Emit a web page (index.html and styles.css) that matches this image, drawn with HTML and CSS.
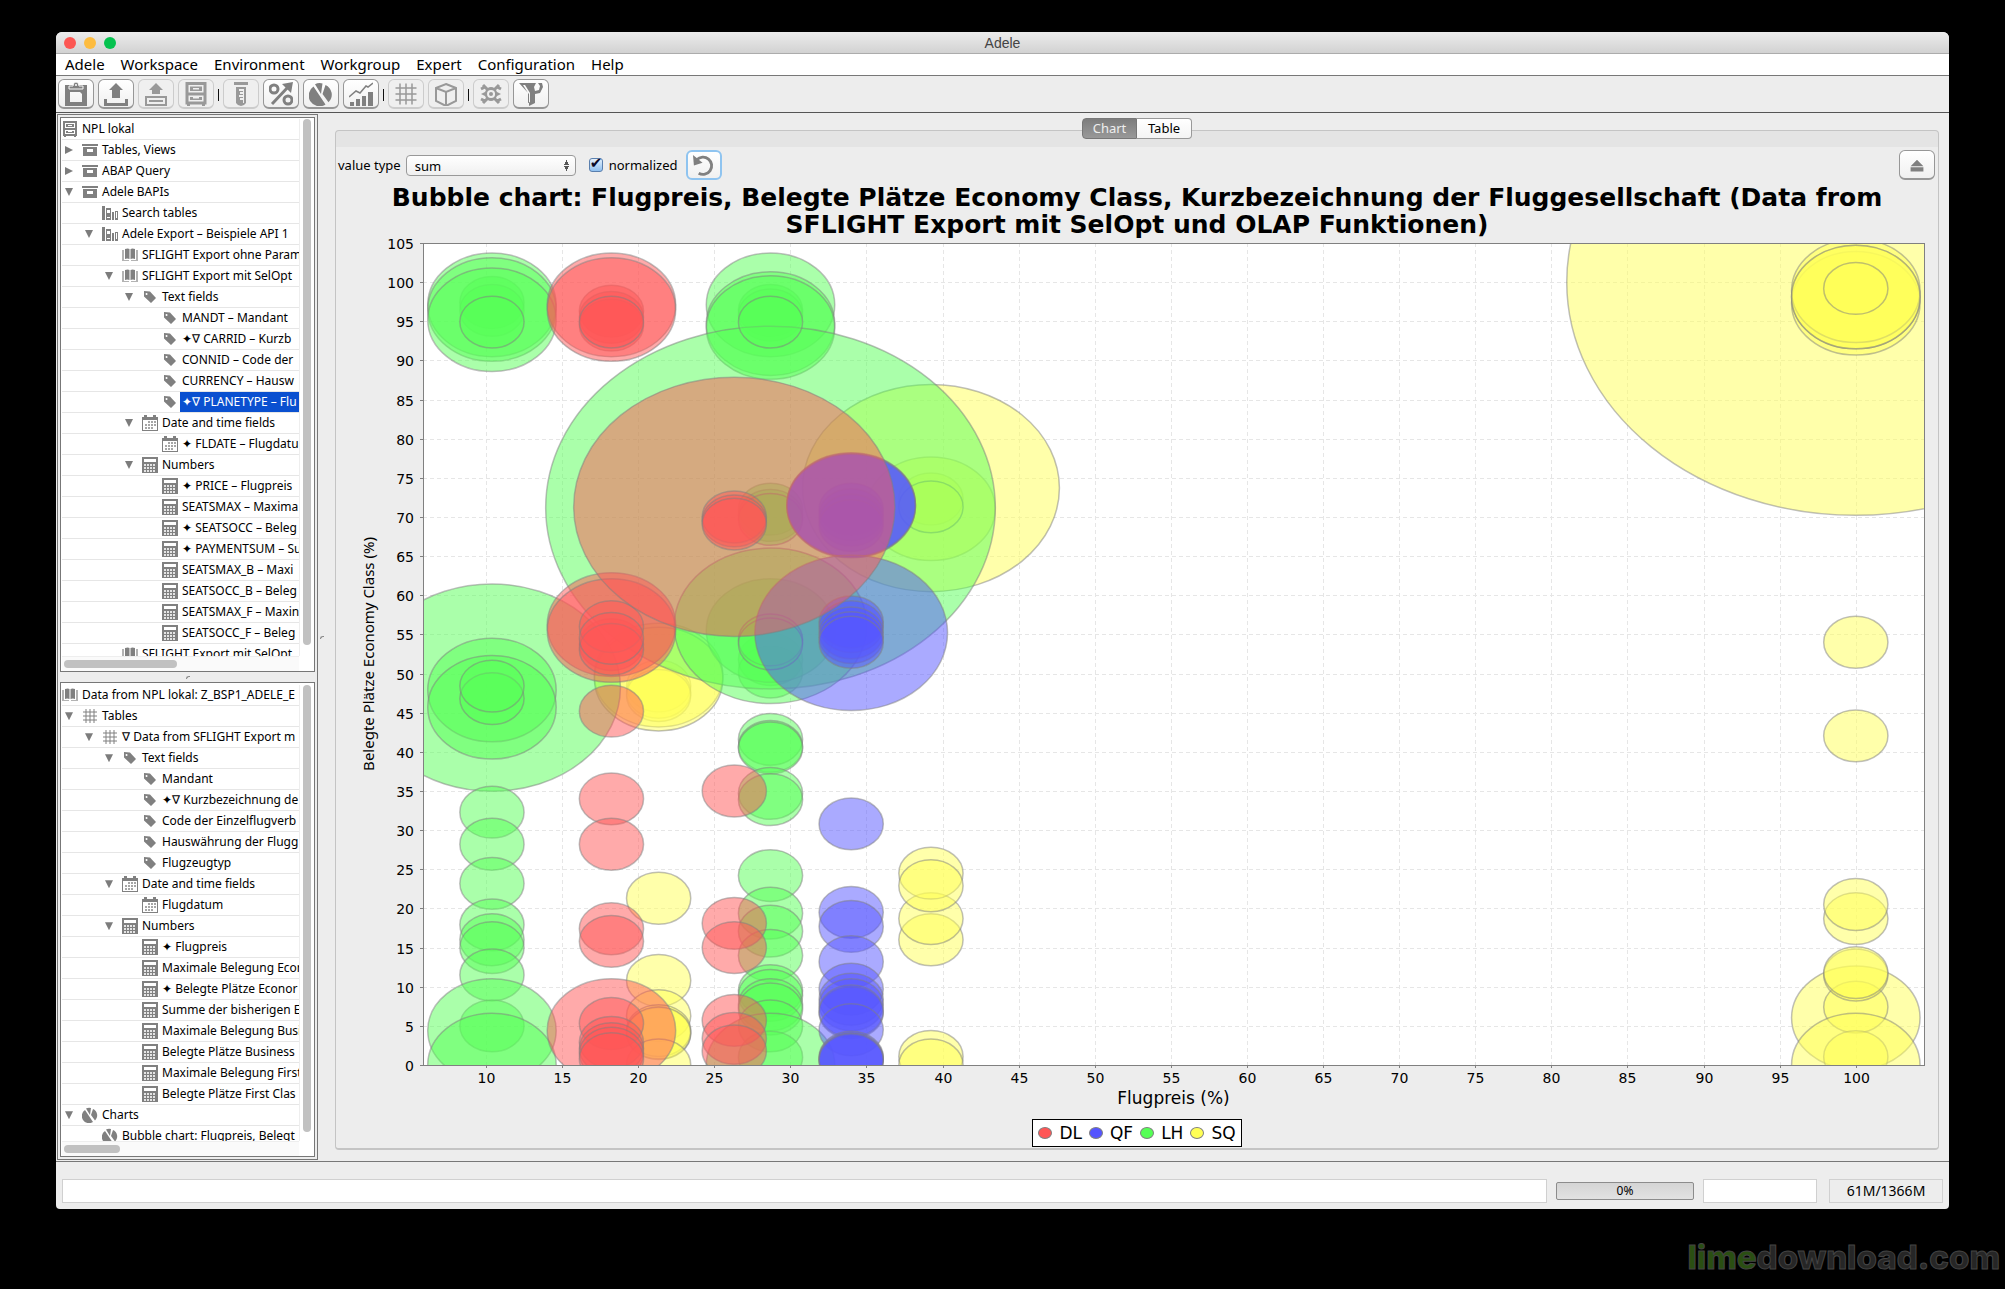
FILE: index.html
```html
<!DOCTYPE html>
<html lang="en">
<head>
    <meta charset="UTF-8">
    <title>Adele</title>
    <link rel="stylesheet" href="styles.css">
</head>
<body>
<svg class="defs" xmlns="http://www.w3.org/2000/svg">
    <symbol id="cabinet" viewBox="0 0 16 16"><path fill-rule="evenodd" d="M1 0h14v15h-1v1h-2v-1H4v1H2v-1H1zM3 2v5h10V2zM3 9v4h10V9z"/><path fill-rule="evenodd" d="M4 3h8v3H4zM6 4v1h4V4zM4 10h8v2H4zM6 10v1h4v-1z"/></symbol>
    <symbol id="box" viewBox="0 0 16 16"><path fill-rule="evenodd" d="M0 2h16v2H0zM1 5h14v9H1zM5 7v3h6V7z"/></symbol>
    <symbol id="shelf" viewBox="0 0 16 16"><path fill-rule="evenodd" d="M0 1h3v14H0zM4 3h5v12H4zM5 5v3h3V5zM5 12v1h3v-1zM10 7h2v8h-2zM13 6h3v9h-3zM14 7v6h1V7z"/></symbol>
    <symbol id="book" viewBox="0 0 16 16"><path d="M0 3h2v10h5v1H0zM14 3h2v11H9v-1h5z" opacity=".6"/><path d="M3 2q3-1 4.500 0v10Q5 11 3 12zM8.500 2q2-1 4.500 0v10q-2-1-4.500 0z"/></symbol>
    <symbol id="tag" viewBox="0 0 16 16"><path fill-rule="evenodd" d="M2 2l6 .5 6 6.500-5 5-7-6.500zM4.500 4a1 1 0 1 0 .1 2 1 1 0 0 0-.1-2z"/></symbol>
    <symbol id="calendar" viewBox="0 0 16 16"><path fill-rule="evenodd" d="M0 2h2V0h3v2h6V0h3v2h2v14H0zM1 5v10h14V5z"/><path d="M6 6h2v2H6zM9 6h2v2H9zM12 6h2v2h-2zM3 9h2v2H3zM6 9h2v2H6zM9 9h2v2H9zM12 9h2v2h-2zM3 12h2v2H3zM6 12h2v2H6zM9 12h2v2H9z" opacity=".7"/></symbol>
    <symbol id="calc" viewBox="0 0 16 16"><path fill-rule="evenodd" d="M0 0h16v16H0zM2 2v3h12V2z"/><path d="M2 8h12M2 11h12M2 14h12" fill="none" stroke="#e4e4e4" stroke-width="2" stroke-dasharray="2 1"/></symbol>
    <symbol id="grid" viewBox="0 0 16 16"><path d="M4 1v14M8 1v14M12 1v14M1 4h14M1 8h14M1 12h14" fill="none" stroke="currentColor" stroke-width="1"/></symbol>
    <symbol id="pie" viewBox="0 0 16 16"><path d="M3 3a7 7 0 1 0 8 12L7 9zM4 1.500A7 7 0 0 1 9 1L8 8zM11 2a7 7 0 0 1 2 11.500L9 8z"/></symbol>
    <symbol id="clipboard" viewBox="0 0 24 24"><path fill-rule="evenodd" d="M1 3h22v21H1zM6 10v10h12v-8l-2-2z"/><path d="M5 7V4h4q0-4 3-4t3 4h4v3z" stroke="#f8f8f8"/><circle cx="12" cy="3" r="1" fill="#fff"/></symbol>
    <symbol id="upload" viewBox="0 0 24 24"><path d="M12 1l7 7h-3v8H8V8H5zM0 17h3v4h18v-4h3v7H0z"/></symbol>
    <symbol id="export" viewBox="0 0 24 24"><path fill-rule="evenodd" d="M12 1l7 7h-3v4H8V8H5zM1 14h22v10H1zM3 16v6h18v-6zM5 18h14v2H5z"/></symbol>
    <symbol id="tube" viewBox="0 0 24 24"><path fill-rule="evenodd" d="M5 0h14v3H5zM7 5h10v16q-2 3-5 3t-5-3zM10 7v2h4v1h-3v2h3v1h-4v2h4v1h-3v2h3v3h1V7z"/></symbol>
    <symbol id="percent" viewBox="0 0 24 24"><g fill="none" stroke="currentColor"><circle cx="5" cy="7" r="4" stroke-width="3"/><circle cx="19" cy="18" r="4" stroke-width="3"/><path d="M3 22L20 4" stroke-width="3"/></g><path d="M13 2l11-2-2 11z"/></symbol>
    <symbol id="bars" viewBox="0 0 24 24"><path d="M1 20h4v4H1zM7 17h4v7H7zM13 14h4v10h-4zM19 10h5v14h-5z"/><path d="M0 15l7-6 4 2 6-7 2 1 5-4" fill="none" stroke="currentColor" stroke-width="1.500"/></symbol>
    <symbol id="cube" viewBox="0 0 24 24"><path d="M12 2l10 4v13l-10 5-10-5V6zM2 6l10 4 10-4M12 10v14" fill="none" stroke="currentColor" stroke-width="2"/></symbol>
    <symbol id="gear" viewBox="0 0 24 24"><path d="M4 3l5 5M20 3l-5 5M4 21l5-5M20 21l-5-5M2 7l4-2M22 7l-4-2M2 17l4 2M22 17l-4 2" fill="none" stroke="currentColor" stroke-width="3"/><path fill-rule="evenodd" d="M2 12l4-2q2-5 6-5t6 5l4 2-4 2q-2 5-6 5t-6-5zM12 8a4 4 0 1 0 .1 8 4 4 0 0 0-.1-8z"/><circle cx="12" cy="12" r="2"/></symbol>
    <symbol id="funnel" viewBox="0 0 24 24"><path fill-rule="evenodd" d="M0 1h17l-2 4 1 4 4-1 1-4-2-3h4l1 4-3 6-5 1v9l-6 3V12zM4 3l5 8v10l2-1V11L6 3z"/></symbol>
    <symbol id="undo" viewBox="0 0 24 24"><path d="M5 6a9 9 0 1 1 2 14" fill="none" stroke="currentColor" stroke-width="3"/><path d="M1 1l1 11 9-3z"/></symbol>
    <symbol id="eject" viewBox="0 0 24 24"><path d="M12 3l11 11H1zM1 16h22v7H1z"/></symbol>
</svg>

<div class="window">
    <header class="titlebar">
        <span class="light red"></span><span class="light orange"></span><span class="light green"></span>
        <span class="caption">Adele</span>
    </header>
    <nav class="menubar">
        <a href="#">Adele</a><a href="#">Workspace</a><a href="#">Environment</a><a href="#">Workgroup</a><a href="#">Expert</a><a href="#">Configuration</a><a href="#">Help</a>
    </nav>
    <div class="toolbar">
        <button class="tool" aria-label="Paste"><svg><use href="#clipboard"/></svg></button>
        <button class="tool" aria-label="Upload"><svg><use href="#upload"/></svg></button>
        <button class="tool" aria-label="Export" disabled><svg><use href="#export"/></svg></button>
        <button class="tool" aria-label="System" disabled><svg><use href="#cabinet"/></svg></button>
        <span class="sep"></span>
        <button class="tool" aria-label="Test" disabled><svg><use href="#tube"/></svg></button>
        <button class="tool" aria-label="Ratios"><svg><use href="#percent"/></svg></button>
        <button class="tool" aria-label="Pie chart"><svg><use href="#pie"/></svg></button>
        <button class="tool" aria-label="Bar chart"><svg><use href="#bars"/></svg></button>
        <span class="sep"></span>
        <button class="tool" aria-label="Table" disabled><svg><use href="#grid"/></svg></button>
        <button class="tool" aria-label="Cube" disabled><svg><use href="#cube"/></svg></button>
        <span class="sep"></span>
        <button class="tool" aria-label="View" disabled><svg><use href="#gear"/></svg></button>
        <button class="tool" aria-label="Filter"><svg><use href="#funnel"/></svg></button>
    </div>

    <div class="work">
        <aside class="sidebar">
            <section class="pane pane-top">
                <ul class="tree">
                    <li class="l0"><svg><use href="#cabinet"/></svg><span>NPL lokal</span></li>
                    <li class="l1"><i class="arrow closed"></i><svg><use href="#box"/></svg><span>Tables, Views</span></li>
                    <li class="l1"><i class="arrow closed"></i><svg><use href="#box"/></svg><span>ABAP Query</span></li>
                    <li class="l1"><i class="arrow"></i><svg><use href="#box"/></svg><span>Adele BAPIs</span></li>
                    <li class="l2"><svg><use href="#shelf"/></svg><span>Search tables</span></li>
                    <li class="l2"><i class="arrow"></i><svg><use href="#shelf"/></svg><span>Adele Export – Beispiele API 1</span></li>
                    <li class="l3"><svg><use href="#book"/></svg><span>SFLIGHT Export ohne Param</span></li>
                    <li class="l3"><i class="arrow"></i><svg><use href="#book"/></svg><span>SFLIGHT Export mit SelOpt</span></li>
                    <li class="l4"><i class="arrow"></i><svg><use href="#tag"/></svg><span>Text fields</span></li>
                    <li class="l5"><svg><use href="#tag"/></svg><span>MANDT – Mandant</span></li>
                    <li class="l5"><svg><use href="#tag"/></svg><span>✦∇ CARRID – Kurzb</span></li>
                    <li class="l5"><svg><use href="#tag"/></svg><span>CONNID – Code der</span></li>
                    <li class="l5"><svg><use href="#tag"/></svg><span>CURRENCY – Hausw</span></li>
                    <li class="l5 selected"><svg><use href="#tag"/></svg><span>✦∇ PLANETYPE – Flu</span></li>
                    <li class="l4"><i class="arrow"></i><svg><use href="#calendar"/></svg><span>Date and time fields</span></li>
                    <li class="l5"><svg><use href="#calendar"/></svg><span>✦ FLDATE – Flugdatu</span></li>
                    <li class="l4"><i class="arrow"></i><svg><use href="#calc"/></svg><span>Numbers</span></li>
                    <li class="l5"><svg><use href="#calc"/></svg><span>✦ PRICE – Flugpreis</span></li>
                    <li class="l5"><svg><use href="#calc"/></svg><span>SEATSMAX – Maxima</span></li>
                    <li class="l5"><svg><use href="#calc"/></svg><span>✦ SEATSOCC – Beleg</span></li>
                    <li class="l5"><svg><use href="#calc"/></svg><span>✦ PAYMENTSUM – Su</span></li>
                    <li class="l5"><svg><use href="#calc"/></svg><span>SEATSMAX_B – Maxi</span></li>
                    <li class="l5"><svg><use href="#calc"/></svg><span>SEATSOCC_B – Beleg</span></li>
                    <li class="l5"><svg><use href="#calc"/></svg><span>SEATSMAX_F – Maxin</span></li>
                    <li class="l5"><svg><use href="#calc"/></svg><span>SEATSOCC_F – Beleg</span></li>
                    <li class="l3"><svg><use href="#book"/></svg><span>SFLIGHT Export mit SelOpt</span></li>
                </ul>
                <div class="vbar"><div class="thumb"></div></div>
                <div class="hbar"><div class="thumb"></div></div>
            </section>
            <div class="splitter"><i class="grip"></i></div>
            <section class="pane pane-bottom">
                <ul class="tree">
                    <li class="l0"><svg><use href="#book"/></svg><span>Data from NPL lokal: Z_BSP1_ADELE_E</span></li>
                    <li class="l1"><i class="arrow"></i><svg><use href="#grid"/></svg><span>Tables</span></li>
                    <li class="l2"><i class="arrow"></i><svg><use href="#grid"/></svg><span>∇ Data from SFLIGHT Export m</span></li>
                    <li class="l3"><i class="arrow"></i><svg><use href="#tag"/></svg><span>Text fields</span></li>
                    <li class="l4"><svg><use href="#tag"/></svg><span>Mandant</span></li>
                    <li class="l4"><svg><use href="#tag"/></svg><span>✦∇ Kurzbezeichnung de</span></li>
                    <li class="l4"><svg><use href="#tag"/></svg><span>Code der Einzelflugverb</span></li>
                    <li class="l4"><svg><use href="#tag"/></svg><span>Hauswährung der Flugg</span></li>
                    <li class="l4"><svg><use href="#tag"/></svg><span>Flugzeugtyp</span></li>
                    <li class="l3"><i class="arrow"></i><svg><use href="#calendar"/></svg><span>Date and time fields</span></li>
                    <li class="l4"><svg><use href="#calendar"/></svg><span>Flugdatum</span></li>
                    <li class="l3"><i class="arrow"></i><svg><use href="#calc"/></svg><span>Numbers</span></li>
                    <li class="l4"><svg><use href="#calc"/></svg><span>✦ Flugpreis</span></li>
                    <li class="l4"><svg><use href="#calc"/></svg><span>Maximale Belegung Econ</span></li>
                    <li class="l4"><svg><use href="#calc"/></svg><span>✦ Belegte Plätze Econor</span></li>
                    <li class="l4"><svg><use href="#calc"/></svg><span>Summe der bisherigen E</span></li>
                    <li class="l4"><svg><use href="#calc"/></svg><span>Maximale Belegung Busi</span></li>
                    <li class="l4"><svg><use href="#calc"/></svg><span>Belegte Plätze Business</span></li>
                    <li class="l4"><svg><use href="#calc"/></svg><span>Maximale Belegung First</span></li>
                    <li class="l4"><svg><use href="#calc"/></svg><span>Belegte Plätze First Clas</span></li>
                    <li class="l1"><i class="arrow"></i><svg><use href="#pie"/></svg><span>Charts</span></li>
                    <li class="l2"><svg><use href="#pie"/></svg><span>Bubble chart: Flugpreis, Belegt</span></li>
                </ul>
                <div class="vbar"><div class="thumb"></div></div>
                <div class="hbar"><div class="thumb"></div></div>
            </section>
        </aside>
        <div class="divider"><i class="grip"></i></div>

        <main class="main">
            <div class="tabs">
                <button class="tab active">Chart</button><button class="tab">Table</button>
            </div>
            <div class="panel">
                <div class="controls">
                    <label for="value-type">value type</label>
                    <select id="value-type" class="select"><option>sum</option></select>
                    <input id="normalized" class="check" type="checkbox" checked>
                    <label for="normalized">normalized</label>
                    <button class="tool refresh" aria-label="Reset"><svg><use href="#undo"/></svg></button>
                    <button class="tool eject" aria-label="Detach"><svg><use href="#eject"/></svg></button>
                </div>
                <h1 class="chart-title">Bubble chart: Flugpreis, Belegte Plätze Economy Class, Kurzbezeichnung der Fluggesellschaft (Data from SFLIGHT Export mit SelOpt und OLAP Funktionen)</h1>
                <div class="chart"><svg id="chart"></svg></div>
                <div class="legend">
                    <span><i class="dot dl"></i>DL</span>
                    <span><i class="dot qf"></i>QF</span>
                    <span><i class="dot lh"></i>LH</span>
                    <span><i class="dot sq"></i>SQ</span>
                </div>
            </div>
        </main>
    </div>

    <footer class="status">
        <input class="message" type="text" aria-label="Message">
        <div class="progress">0%</div>
        <input class="field" type="text" aria-label="Info">
        <div class="memory">61M/1366M</div>
    </footer>
</div>
<div class="watermark"><b>lime</b>download.com</div>
<script src="chart.js"></script>
</body>
</html>
```

FILE: styles.css
```css
* {
    box-sizing: border-box;
}
body {
    display: flex;
    flex-direction: column;
    height: 100vh;
    margin: 0;
    padding: 32px 56px 80px;
    background: #000;
    color: #000;
    font: 12px/20px "Noto Sans", "DejaVu Sans", sans-serif;
    position: relative;
    overflow: hidden;
}
button, input, select {
    font: inherit;
    color: inherit;
    margin: 0;
    padding: 0;
}
.defs {
    position: absolute;
    width: 0;
    height: 0;
}
.window {
    flex: 1;
    min-height: 0;
    display: flex;
    flex-direction: column;
    background: #ededed;
    border-radius: 6px 6px 4px 4px;
    overflow: hidden;
}

/* title bar and menu */
.titlebar {
    display: flex;
    align-items: center;
    gap: 8px;
    height: 22px;
    padding-left: 8px;
    background: linear-gradient(#ececec, #d2d2d2);
    border-bottom: 1px solid #acacac;
    position: relative;
}
.light {
    width: 12px;
    height: 12px;
    border-radius: 50%;
}
.red {
    background: #fc5753;
}
.orange {
    background: #fdbc40;
}
.green {
    background: #05c24f;
}
.caption {
    position: absolute;
    left: 0;
    right: 0;
    text-align: center;
    color: #444;
    font: 14px/22px "Liberation Sans", sans-serif;
}
.menubar {
    display: flex;
    gap: 16px;
    height: 22px;
    padding-left: 9px;
    background: #fff;
    border-bottom: 1px solid #777;
    font-size: 15px;
    line-height: 21px;
}
.menubar a {
    color: #000;
    text-decoration: none;
}
.toolbar {
    display: flex;
    gap: 4px;
    height: 37px;
    padding: 3px 2px;
    border-bottom: 1px solid #555;
}
.tool {
    display: flex;
    align-items: center;
    justify-content: center;
    width: 36px;
    height: 30px;
    color: #808080;
    background: linear-gradient(#fff, #f0f0f0);
    border: 1px solid #979797;
    border-bottom-width: 2px;
    border-radius: 6px;
}
.tool svg {
    width: 24px;
    height: 24px;
    fill: currentColor;
}
.tool:disabled {
    color: #999;
    background: #efefef;
    border-color: #ccc;
}
.sep {
    width: 1px;
    height: 12px;
    margin-top: 10px;
    background: #111;
}

/* trees */
.work {
    flex: 1;
    min-height: 0;
    display: flex;
    border-bottom: 1px solid #777;
}
.sidebar {
    display: flex;
    flex-direction: column;
    width: 261px;
    margin: 1px 0 1px 1px;
    padding: 2px;
    border: 1px solid #777;
}
.pane {
    display: grid;
    grid-template-columns: 1fr 15px;
    grid-template-rows: minmax(0, 1fr) 15px;
    min-height: 0;
    padding: 1px 0 0 1px;
    background: #fff;
    border: 1px solid #777;
}
.pane-top {
    flex: 557 1 0;
}
.pane-bottom {
    flex: 475 1 0;
    padding-top: 2px;
}
.tree {
    min-width: 0;
    margin: 0;
    padding: 0;
    overflow: hidden;
    list-style: none;
}
.tree li {
    display: flex;
    align-items: center;
    height: 21px;
    border-bottom: 1px solid #e6e6e6;
    white-space: nowrap;
}
.tree svg {
    flex: none;
    width: 16px;
    height: 16px;
    margin-right: 2px;
    fill: currentColor;
    color: #808080;
}
.tree span {
    flex: 1;
    min-width: 0;
    padding-left: 2px;
}
.tree .selected span {
    background: #0a50d0;
    color: #fff;
}
.arrow {
    flex: none;
    width: 8px;
    height: 8px;
    margin: 0 9px 0 -17px;
    background: #7c7c7c;
    clip-path: polygon(0 0, 100% 0, 50% 100%);
}
.arrow.closed {
    clip-path: polygon(0 0, 100% 50%, 0 100%);
}
.l1 {
    padding-left: 20px;
}
.l2 {
    padding-left: 40px;
}
.l3 {
    padding-left: 60px;
}
.l4 {
    padding-left: 80px;
}
.l5 {
    padding-left: 100px;
}
.vbar {
    padding: 0 3px;
    border-left: 1px solid #eee;
}
.vbar .thumb {
    height: 98%;
    border-radius: 4px;
    background: #c1c1c1;
}
.hbar {
    padding: 3px 0 3px 2px;
    background: #fafafa;
    border-top: 1px solid #eee;
}
.hbar .thumb {
    width: 48%;
    height: 8px;
    border-radius: 4px;
    background: #c1c1c1;
}
.pane-bottom .hbar .thumb {
    width: 24%;
}
.splitter {
    display: flex;
    align-items: center;
    justify-content: center;
    height: 10px;
}
.divider {
    display: flex;
    align-items: center;
    width: 17px;
    padding: 0 2px;
}
.grip {
    width: 4px;
    height: 3px;
    border: solid #888;
    border-width: 1px 0 0 1px;
    border-radius: 3px 0 0 0;
}

/* chart panel */
.main {
    flex: 1;
    min-width: 0;
    display: flex;
    flex-direction: column;
    padding: 5px 10px 11px 0;
}
.tabs {
    display: flex;
    justify-content: center;
    height: 21px;
    margin-bottom: -9px;
    position: relative;
}
.tab {
    width: 55px;
    background: linear-gradient(#fff, #f4f4f4);
    border: 1px solid #999;
    border-left: 0;
    border-radius: 0 4px 4px 0;
    font-size: 13px;
    line-height: 17px;
}
.tab.active {
    color: #eee;
    background: linear-gradient(#7c7c7c, #999);
    border: 1px solid #777;
    border-radius: 4px 0 0 4px;
}
.panel {
    flex: 1;
    min-height: 0;
    display: flex;
    flex-direction: column;
    padding-top: 19px;
    background: linear-gradient(#e4e4e4 16px, #ededed 16px);
    border: 1px solid #c4c4c4;
    border-bottom-width: 2px;
    border-radius: 4px;
}
.controls {
    display: flex;
    align-items: center;
    height: 30px;
    padding: 0 3px 0 2px;
    font-size: 13px;
}
.select {
    width: 170px;
    height: 21px;
    margin: 0 13px 0 5px;
    padding: 0 8px;
    appearance: none;
    border: 1px solid #999;
    border-radius: 4px;
    background:
        conic-gradient(from 153deg at 50% 0, #555 54deg, transparent 0) right 6px top 4px / 5px 5px no-repeat,
        conic-gradient(from -27deg at 50% 100%, #555 54deg, transparent 0) right 6px bottom 4px / 5px 5px no-repeat,
        linear-gradient(#fff, #f0f0f0);
}
.check {
    width: 14px;
    height: 14px;
    margin-right: 6px;
    appearance: none;
    background: linear-gradient(#e4f0fc, #8fc0f0);
    border: 1px solid #5a7fae;
    border-radius: 3px;
}
.check:checked::before {
    content: "✔";
    display: block;
    color: #0a0a28;
    font: 15px/9px "DejaVu Sans", sans-serif;
}
.refresh {
    margin-left: 8px;
    border: 2px solid #8fc4f0;
}
.refresh svg {
    width: 23px;
    height: 23px;
}
.eject {
    margin-left: auto;
}
.eject svg {
    width: 16px;
    height: 14px;
}
.chart-title {
    margin: 4px 0 0;
    font: bold 25px/27px "DejaVu Sans", sans-serif;
    text-align: center;
    padding: 0 20px;
}
.chart {
    flex: 1;
    min-height: 0;
}
.chart > svg {
    display: block;
    width: 100%;
    height: 100%;
}
.chart text {
    font-family: "DejaVu Sans", sans-serif;
    font-size: 14px;
}
.chart .x-title {
    font-size: 17px;
}
.chart .y-title {
    font-family: "Noto Sans", sans-serif;
    font-size: 15px;
}
.grid-line {
    stroke: #e6e6e6;
    stroke-dasharray: 4 3;
}
.tick {
    stroke: #808080;
}
.frame {
    fill: none;
    stroke: #808080;
}
.bubble {
    fill-opacity: .5;
    stroke: #808080;
    stroke-opacity: .5;
    stroke-width: 1.5px;
}
.bubble.dl {
    fill: #f55;
}
.bubble.qf {
    fill: #55f;
}
.bubble.lh {
    fill: #5f5;
}
.bubble.sq {
    fill: #ff5;
}
.legend {
    display: flex;
    align-self: center;
    gap: 7px;
    height: 28px;
    margin: 8px 0 1px;
    padding: 0 5px;
    background: #fff;
    border: 1px solid #000;
    font: 17px/26px "DejaVu Sans", sans-serif;
}
.legend span {
    display: flex;
    align-items: center;
    gap: 7px;
}
.dot {
    width: 14px;
    height: 12px;
    border: 1px solid #808080;
    border-radius: 50%;
}
.dot.dl {
    background: #f55;
}
.dot.qf {
    background: #55f;
}
.dot.lh {
    background: #5f5;
}
.dot.sq {
    background: #ff5;
}

/* status bar */
.status {
    display: flex;
    align-items: center;
    height: 47px;
    padding: 11px 6px 0;
}
.message, .field, .memory {
    height: 24px;
    border: 1px solid #d0d0d0;
    background: #fff;
}
.message {
    flex: 1;
}
.progress {
    width: 138px;
    height: 18px;
    margin: 0 9px;
    background: linear-gradient(#d4d4d4, #e2e2e2);
    border: 1px solid #8c8c8c;
    border-radius: 2px;
    line-height: 16px;
    text-align: center;
}
.field {
    width: 114px;
    margin-right: 12px;
}
.memory {
    width: 114px;
    background: #ededed;
    font-size: 14px;
    line-height: 22px;
    text-align: center;
}
.watermark {
    position: absolute;
    right: 5px;
    bottom: 12px;
    color: #262626;
    font: 800 33px/40px Inter, sans-serif;
    -webkit-text-stroke: 1px #444;
}
.watermark b {
    font-weight: 800;
    color: #2a4f12;
}
```

FILE: chart.js
```js
(() => {
    const svg = document.querySelector("#chart");
    const NS = "http://www.w3.org/2000/svg";
    const margin = { top: 5, right: 14, bottom: 46, left: 87 };
    const xRange = [5.87, 104.48];
    const yRange = [0, 105];
    const unit = { x: 2.11, y: 3.31 }; // bubble radius of size 1, in axis units

    // per series: price, then the seats as [value, size], painted in this order
    const series = [
        { name: "sq", x: 21.35, points: [[48.4, 1], [47.6, 1], [47.2, 1], [49.8, 2], [49.3, 2], [21.3, 1], [10.8, 1], [6.3, 1], [4, 1], [4.4, 1], [4.1, 1], [0, 1]] },
        { name: "sq", x: 39.24, points: [[72.3, 1], [71.05, 2], [73.7, 4], [71.3, 1], [16, 1], [18.7, 1], [24.5, 1], [22.9, 1], [1.1, 1], [0, 1]] },
        { name: "sq", x: 100, points: [[100, 9], [97.3, 2], [98.1, 2], [98.9, 2], [98.1, 2], [99.2, 1], [54, 1], [42.05, 1], [18.7, 1], [20.5, 1], [6.04, 2], [7.4, 1], [11.5, 1], [11.8, 1], [1.06, 1], [0, 2]] },
        { name: "lh", x: 10.4, points: [[97.4, 1], [96.4, 1], [97.1, 2], [96.5, 2], [95.2, 2], [94.9, 1], [48.2, 4], [47.9, 2], [45.7, 2], [46.8, 1], [48.4, 1], [32.3, 1], [28.2, 1], [23.2, 1], [17.9, 1], [16, 1], [15, 1], [11.5, 1], [5, 1], [4.4, 2], [0, 2]] },
        { name: "lh", x: 28.7, points: [[96.4, 1], [95.8, 1], [97.1, 2], [94.7, 2], [94.2, 2], [71, 1], [70.2, 1], [51.8, 1], [50.2, 1], [55.5, 2], [71.2, 7], [94.9, 1], [69.7, 1], [56.1, 3], [54.3, 1], [53.8, 1], [41.6, 1], [40.7, 1], [40.5, 1], [34.7, 1], [33.9, 1], [24.2, 1], [19.4, 1], [17.1, 1], [14, 1], [9.5, 1], [8.9, 1], [7.7, 1], [7.15, 1], [5, 1], [1, 1], [0, 2]] },
        { name: "qf", x: 34, points: [[71, 1], [70.3, 1], [69.6, 1], [68.9, 1], [71.6, 2], [71.4, 2], [71.5, 2], [55.2, 3], [56.6, 1], [56, 1], [55.2, 1], [54.6, 1], [54, 1], [30.8, 1], [19.5, 1], [17.7, 1], [13.2, 1], [9.7, 1], [8.4, 1], [7.7, 1], [6.7, 1], [6.9, 1], [4.5, 1], [1, 1], [.8, 1], [.6, 1], [.7, 1]] },
        { name: "dl", x: 18.25, points: [[96.3, 1], [95.5, 1], [94.5, 1], [97.1, 2], [96.5, 2], [94.9, 1], [53.7, 1], [56.25, 2], [55.5, 2], [56, 1], [53.1, 1], [54.5, 1], [45.2, 1], [34, 1], [28.2, 1], [17.4, 1], [15.8, 1], [4.4, 2], [5.3, 1], [2.9, 1], [2.1, 1], [1.5, 1], [.8, 1]] },
        { name: "dl", x: 26.32, points: [[71.3, 5], [70, 1], [69.5, 1], [69.1, 1], [35, 1], [18.1, 1], [15, 1], [5.7, 1], [3.4, 1], [1.8, 1]] }
    ];

    function add(parent, tag, attrs, text) {
        const el = document.createElementNS(NS, tag);
        Object.keys(attrs).forEach((key) => el.setAttribute(key, attrs[key]));
        if (text !== undefined) el.textContent = text;
        parent.appendChild(el);
        return el;
    }

    function render() {
        const box = svg.parentNode.getBoundingClientRect();
        const w = Math.round(box.width - margin.left - margin.right);
        const h = Math.round(box.height - margin.top - margin.bottom);
        const kx = w / (xRange[1] - xRange[0]);
        const ky = h / (yRange[1] - yRange[0]);
        svg.innerHTML = "";

        add(svg, "rect", { x: margin.left, y: margin.top, width: w, height: h, fill: "#fff" });
        // nested svg clips the bubbles at the plot edge
        const plot = add(svg, "svg", { x: margin.left, y: margin.top, width: w, height: h });

        for (let v = 10; v <= 100; v += 5) {
            const x = Math.round((v - xRange[0]) * kx) + .5;
            add(plot, "line", { class: "grid-line", x1: x, x2: x, y1: 0, y2: h });
            add(svg, "line", { class: "tick", x1: x + margin.left, x2: x + margin.left, y1: margin.top + h, y2: margin.top + h + 3 });
            add(svg, "text", { x: x + margin.left, y: margin.top + h + 18, "text-anchor": "middle" }, v);
        }
        for (let v = 0; v <= 105; v += 5) {
            const y = Math.round(h - v * ky) + .5;
            add(plot, "line", { class: "grid-line", x1: 0, x2: w, y1: y, y2: y });
            add(svg, "line", { class: "tick", x1: margin.left - 3, x2: margin.left, y1: y + margin.top, y2: y + margin.top });
            add(svg, "text", { x: margin.left - 9, y: y + margin.top + 5, "text-anchor": "end" }, v);
        }
        series.forEach((s) => s.points.forEach(([value, size]) => {
            add(plot, "ellipse", {
                class: "bubble " + s.name,
                cx: (s.x - xRange[0]) * kx,
                cy: h - value * ky,
                rx: size * unit.x * kx,
                ry: size * unit.y * ky
            });
        }));
        add(svg, "rect", { class: "frame", x: margin.left + .5, y: margin.top + .5, width: w, height: h });

        add(svg, "text", { class: "x-title", x: margin.left + w / 2, y: margin.top + h + 39, "text-anchor": "middle" }, "Flugpreis (%)");
        const ty = margin.top + h / 2;
        add(svg, "text", { class: "y-title", x: 38, y: ty, "text-anchor": "middle", transform: `rotate(-90 38 ${ty})` }, "Belegte Plätze Economy Class (%)");
    }

    render();
    window.addEventListener("resize", render);
})();
```
